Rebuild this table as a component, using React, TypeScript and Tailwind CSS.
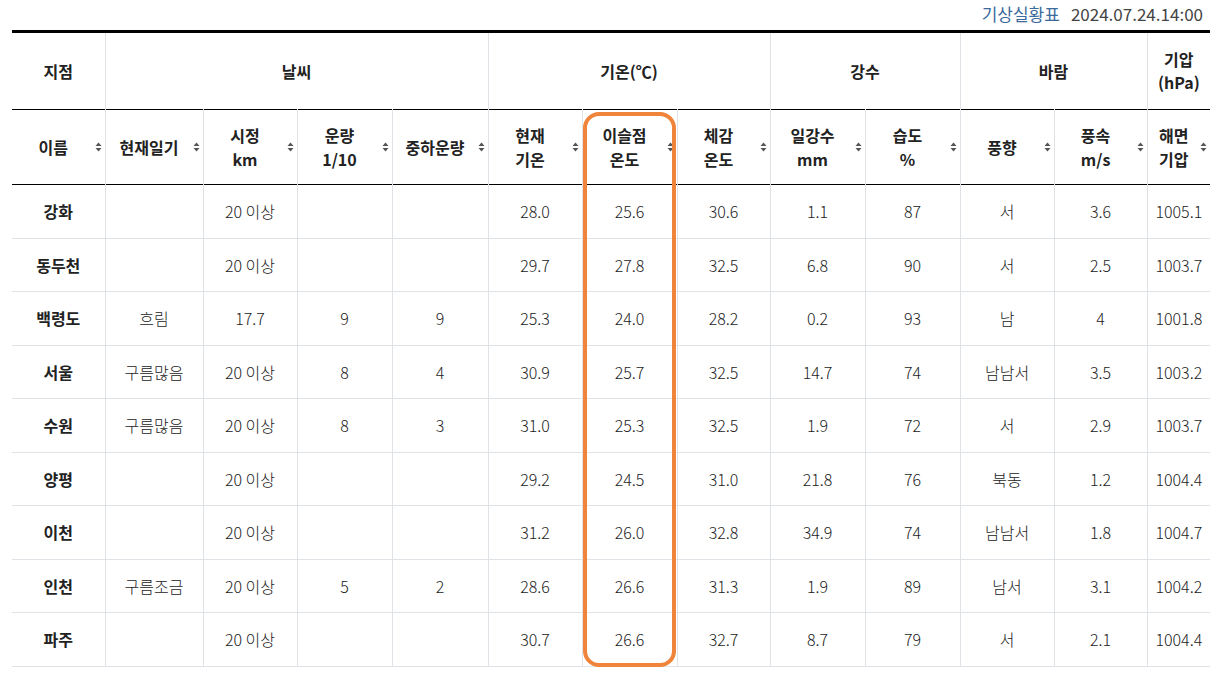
const font = { fontFamily: '"Noto Sans CJK KR", "Noto Sans", sans-serif' };

const rows: string[][] = [
  ["강화", "", "20 이상", "", "", "28.0", "25.6", "30.6", "1.1", "87", "서", "3.6", "1005.1"],
  ["동두천", "", "20 이상", "", "", "29.7", "27.8", "32.5", "6.8", "90", "서", "2.5", "1003.7"],
  ["백령도", "흐림", "17.7", "9", "9", "25.3", "24.0", "28.2", "0.2", "93", "남", "4", "1001.8"],
  ["서울", "구름많음", "20 이상", "8", "4", "30.9", "25.7", "32.5", "14.7", "74", "남남서", "3.5", "1003.2"],
  ["수원", "구름많음", "20 이상", "8", "3", "31.0", "25.3", "32.5", "1.9", "72", "서", "2.9", "1003.7"],
  ["양평", "", "20 이상", "", "", "29.2", "24.5", "31.0", "21.8", "76", "북동", "1.2", "1004.4"],
  ["이천", "", "20 이상", "", "", "31.2", "26.0", "32.8", "34.9", "74", "남남서", "1.8", "1004.7"],
  ["인천", "구름조금", "20 이상", "5", "2", "28.6", "26.6", "31.3", "1.9", "89", "남서", "3.1", "1004.2"],
  ["파주", "", "20 이상", "", "", "30.7", "26.6", "32.7", "8.7", "79", "서", "2.1", "1004.4"],
];

const widths = [93, 98, 94, 95, 96, 94, 95, 93, 95, 95, 94, 93, 63];

const subHeads: string[][] = [
  ["이름"],
  ["현재일기"],
  ["시정", "km"],
  ["운량", "1/10"],
  ["중하운량"],
  ["현재", "기온"],
  ["이슬점", "온도"],
  ["체감", "온도"],
  ["일강수", "mm"],
  ["습도", "%"],
  ["풍향"],
  ["풍속", "m/s"],
  ["해면", "기압"],
];

function SortIcon() {
  return (
    <svg width="7" height="10" viewBox="0 0 7 10" className="absolute right-[3px] top-1/2 -translate-y-1/2">
      <path d="M3.5 0.5 L6.5 4 H0.5 Z" fill="#555" />
      <path d="M3.5 9.5 L6.5 6 H0.5 Z" fill="#555" />
    </svg>
  );
}

export default function App() {
  return (
    <div className="w-[1227px] h-[680px] bg-white overflow-hidden" style={font}>
      <div className="h-[30px] flex items-center justify-end gap-[11px] pr-[24px] pb-[3px] text-[17px]">
        <span className="text-[#3b6a9c]">기상실황표</span>
        <span className="text-[#444]">2024.07.24.14:00</span>
      </div>
      <div className="relative ml-[12px] w-[1198px]">
        <table className="w-[1198px] table-fixed border-collapse border-t-[3px] border-black text-center">
          <colgroup>
            {widths.map((w, i) => (
              <col key={i} style={{ width: w }} />
            ))}
          </colgroup>
          <thead>
            <tr className="h-[78px] border-b border-black text-[16px] font-bold text-[#222]">
              <th className="border-r border-[#dfe2e6]">지점</th>
              <th colSpan={4} className="border-r border-[#dfe2e6]">날씨</th>
              <th colSpan={3} className="border-r border-[#dfe2e6]">기온(℃)</th>
              <th colSpan={2} className="border-r border-[#dfe2e6]">강수</th>
              <th colSpan={2} className="border-r border-[#dfe2e6]">바람</th>
              <th className="leading-[23px]">
                기압
                <br />
                (hPa)
              </th>
            </tr>
            <tr className="h-[75px] border-b border-black text-[16px] font-bold text-[#222]">
              {subHeads.map((h, i) => (
                <th
                  key={i}
                  className={`relative pr-[10px] leading-[24px] ${i < subHeads.length - 1 ? "border-r border-[#dfe2e6]" : ""}`}
                >
                  {h.map((t, j) => (
                    <div key={j}>{t}</div>
                  ))}
                  <SortIcon />
                </th>
              ))}
            </tr>
          </thead>
          <tbody>
            {rows.map((r, ri) => (
              <tr key={ri} className="h-[53.5px] border-b border-[#dfe2e6] text-[16px] font-light text-[#222]">
                {r.map((c, ci) => (
                  <td
                    key={ci}
                    className={`${ci < r.length - 1 ? "border-r border-[#dfe2e6]" : ""} ${ci === 0 ? "font-bold" : ""}`}
                  >
                    {c}
                  </td>
                ))}
              </tr>
            ))}
          </tbody>
        </table>
        {/* highlight around dew point column */}
        <div className="absolute left-[571px] top-[82px] w-[93px] h-[555px] rounded-[16px] border-[4px] border-[#f0843a] pointer-events-none" />
      </div>
    </div>
  );
}
